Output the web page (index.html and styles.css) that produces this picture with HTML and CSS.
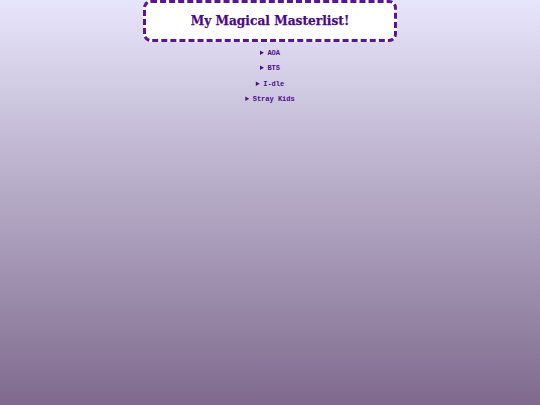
FILE: index.html
```html
<!DOCTYPE html>
<html>
<head>
<meta charset="utf-8">
<link rel="stylesheet" href="styles.css">
</head>
<body>
<header class="banner">
  <h1 class="title">My Magical Masterlist!</h1>
</header>
<main class="list">
  <details class="group"><summary>AOA</summary></details>
  <details class="group"><summary>BTS</summary></details>
  <details class="group"><summary>I-dle</summary></details>
  <details class="group"><summary>Stray Kids</summary></details>
</main>
</body>
</html>
```
FILE: styles.css
```css
html, body {
  margin: 0;
  padding: 0;
  height: 100%;
}
body {
  background: linear-gradient(to bottom, #e7e5fb 0%, #7f6a8d 100%);
  display: flex;
  flex-direction: column;
  align-items: center;
}
.banner {
  box-sizing: border-box;
  width: 254px;
  height: 42px;
  background: #ffffff;
  border: 3px dashed #5a1590;
  border-radius: 8px;
  display: flex;
  align-items: center;
  justify-content: center;
  padding-bottom: 1px;
}
.title {
  margin: 0;
  font-family: "DejaVu Serif", Georgia, serif;
  font-weight: bold;
  font-size: 12.2px;
  color: #4b0a85;
  -webkit-text-stroke: 0.25px #4b0a85;
}
.list {
  margin-top: 4px;
  display: flex;
  flex-direction: column;
  align-items: center;
}
.group summary {
  font-family: "Liberation Mono", "Courier New", monospace;
  font-weight: bold;
  font-size: 7px;
  color: #4b0f87;
  line-height: 15.35px;
  text-align: center;
  cursor: pointer;
}
```
